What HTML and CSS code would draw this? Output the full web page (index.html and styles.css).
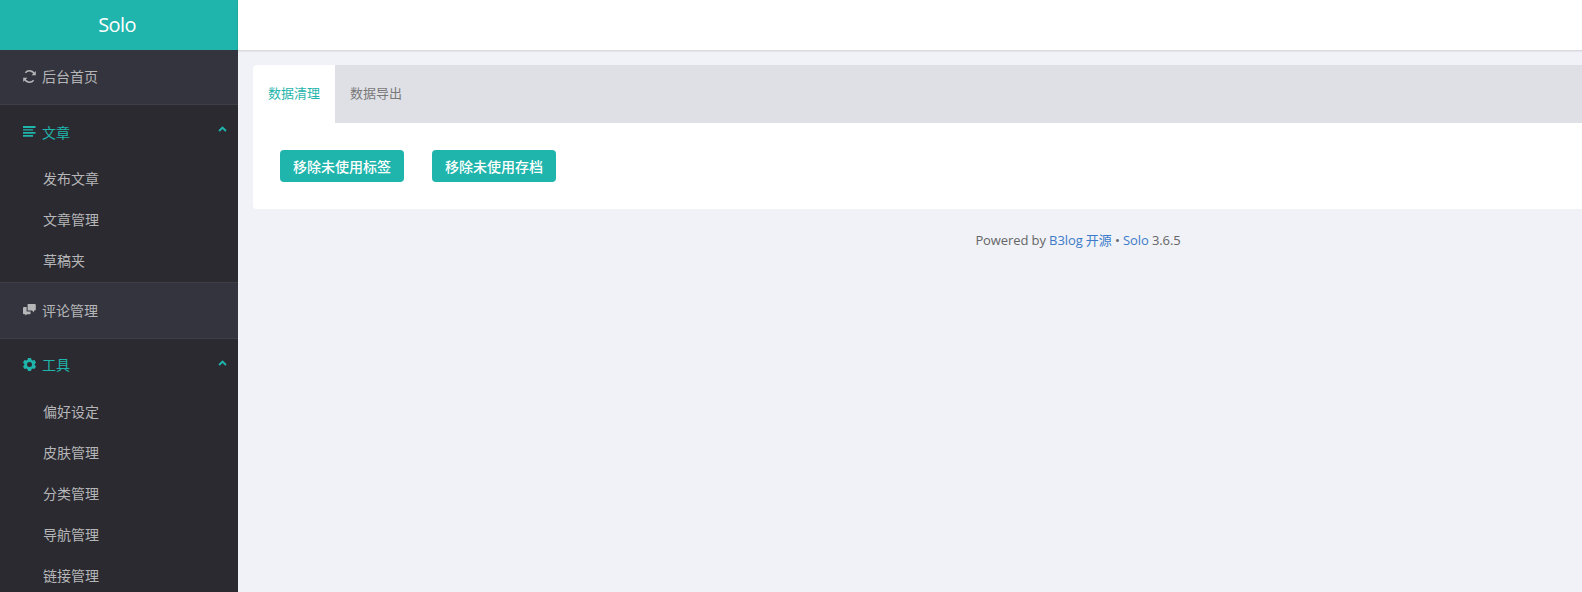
FILE: index.html
```html
<!DOCTYPE html>
<html lang="zh-CN">
<head>
<meta charset="utf-8">
<title>Solo</title>
<link rel="stylesheet" href="styles.css">
</head>
<body>
<div class="page">
  <aside class="sidebar">
    <div class="logo">Solo</div>
    <nav>
      <a class="item">
        <svg class="icon" viewBox="0 0 13 13"><path d="M11.600 5A5.200 5.200 0 0 0 2.400 2.800M1.400 8a5.200 5.200 0 0 0 9.200 2.200" fill="none" stroke="currentColor" stroke-width="1.400"/><path d="M12.800 1v4.200H8.600zM.2 12V7.800h4.200z" fill="currentColor"/></svg>
        <span>后台首页</span>
      </a>
      <section class="group">
        <div class="group-head">
          <svg class="icon" viewBox="0 0 13 13"><path d="M0 1h12.500v2H0zM0 4.200h10v1.300H0zM0 7h12.500v1.800H0zM0 10h10v1.800H0z" fill="currentColor"/></svg>
          <span>文章</span>
          <svg class="caret" viewBox="0 0 10 7"><path d="M5 .2 9.800 5 8.200 6.600 5 3.400 1.800 6.600.2 5z" fill="currentColor"/></svg>
        </div>
        <a class="sub">发布文章</a>
        <a class="sub">文章管理</a>
        <a class="sub">草稿夹</a>
      </section>
      <a class="item">
        <svg class="icon" viewBox="0 0 13 13"><path d="M4.600 1h7.200a1 1 0 0 1 1 1v4.600a1 1 0 0 1-1 1h-.8v2l-2-2H4.600z" fill="currentColor"/><path d="M1 4h2.600v4.600H7.600v1.600a1 1 0 0 1-1 1H4.200L2.400 12.600v-1.400H1a1 1 0 0 1-1-1V5a1 1 0 0 1 1-1z" fill="currentColor"/></svg>
        <span>评论管理</span>
      </a>
      <section class="group group-tools">
        <div class="group-head">
          <svg class="icon" viewBox="0 0 13 13"><path fill-rule="evenodd" d="M5 0h3l.5 1.800 1.200.7 1.800-.5L13 4.600l-1.300 1.300v1.200L13 8.400 11.500 11l-1.800-.5-1.200.7L8 13H5l-.5-1.800-1.200-.7-1.800.5L0 8.400l1.300-1.300V5.900L0 4.600 1.500 2l1.800.5 1.200-.7zM6.500 4a2.500 2.500 0 1 0 0 5 2.500 2.500 0 0 0 0-5z" fill="currentColor"/></svg>
          <span>工具</span>
          <svg class="caret" viewBox="0 0 10 7"><path d="M5 .2 9.800 5 8.200 6.600 5 3.400 1.800 6.600.2 5z" fill="currentColor"/></svg>
        </div>
        <a class="sub">偏好设定</a>
        <a class="sub">皮肤管理</a>
        <a class="sub">分类管理</a>
        <a class="sub">导航管理</a>
        <a class="sub">链接管理</a>
      </section>
    </nav>
  </aside>
  <main class="main">
    <header class="topbar"></header>
    <div class="content">
      <div class="card">
        <div class="tabs">
          <a class="tab active">数据清理</a>
          <a class="tab">数据导出</a>
        </div>
        <div class="actions">
          <button class="btn">移除未使用标签</button>
          <button class="btn">移除未使用存档</button>
        </div>
      </div>
      <footer class="footer">Powered by <a>B3log 开源</a> • <a>Solo</a> 3.6.5</footer>
    </div>
  </main>
</div>
</body>
</html>
```
FILE: styles.css
```css
html, body {
  margin: 0;
  height: 100%;
  overflow: hidden;
  background: #f0f2f7;
}
body {
  font-family: "Open Sans", "Noto Sans CJK SC", sans-serif;
  font-size: 14px;
  color: #666;
}
.page {
  display: flex;
  width: 1920px;
  height: 592px;
}
.sidebar {
  width: 238px;
  flex: none;
  background: #2a2a30;
  color: #b6b6b8;
  overflow: hidden;
}
.logo {
  height: 50px;
  line-height: 50px;
  padding-right: 4px;
  box-sizing: border-box;
  text-align: center;
  font-size: 20px;
  letter-spacing: -.6px;
  color: #fff;
  background: #1fb5ac;
}
.item, .group-head {
  display: flex;
  align-items: center;
  padding-left: 23px;
  box-sizing: border-box;
}
.item {
  background: #33343e;
  border-bottom: 1px solid #3d3e47;
  height: 55px;
  padding-bottom: 2px;
}
.group + .item {
  border-top: 1px solid #3d3e47;
  height: 57px;
}
.icon {
  width: 13px;
  height: 13px;
  margin-right: 6px;
  flex: none;
}
.group {
  padding-bottom: 1px;
}
.group-head {
  color: #1fb5ac;
  position: relative;
  height: 53px;
}
.group-tools .group-head {
  height: 52px;
  padding-bottom: 2px;
}
.caret {
  position: absolute;
  right: 11px;
  top: 21px;
  width: 9px;
  height: 6px;
}
.sub {
  display: block;
  height: 41px;
  line-height: 41px;
  padding-left: 43px;
}
.main {
  flex: 1;
  min-width: 0;
}
.topbar {
  height: 50px;
  background: #fff;
  box-shadow: 0 1px 2px rgba(0, 0, 0, .15);
}
.content {
  padding: 15px 15px 0;
}
.card {
  background: #fff;
  border-radius: 4px;
  overflow: hidden;
}
.tabs {
  display: flex;
  height: 58px;
  background: #dfe0e6;
}
.tab {
  width: 82px;
  line-height: 56px;
  text-align: center;
  font-size: 13px;
  color: #797979;
}
.tab.active {
  background: #fff;
  color: #1fb5ac;
}
.actions {
  display: flex;
  gap: 28px;
  padding: 27px;
}
.btn {
  height: 32px;
  width: 124px;
  padding: 0;
  border: 0;
  border-radius: 4px;
  background: #1fb5ac;
  color: #fff;
  font: inherit;
  font-size: 14px;
  font-weight: 500;
}
.footer {
  margin-top: 22px;
  padding-right: 2px;
  text-align: center;
  font-size: 13px;
  letter-spacing: -.1px;
  line-height: 18px;
}
.footer a {
  color: #3b7bc8;
}
```
